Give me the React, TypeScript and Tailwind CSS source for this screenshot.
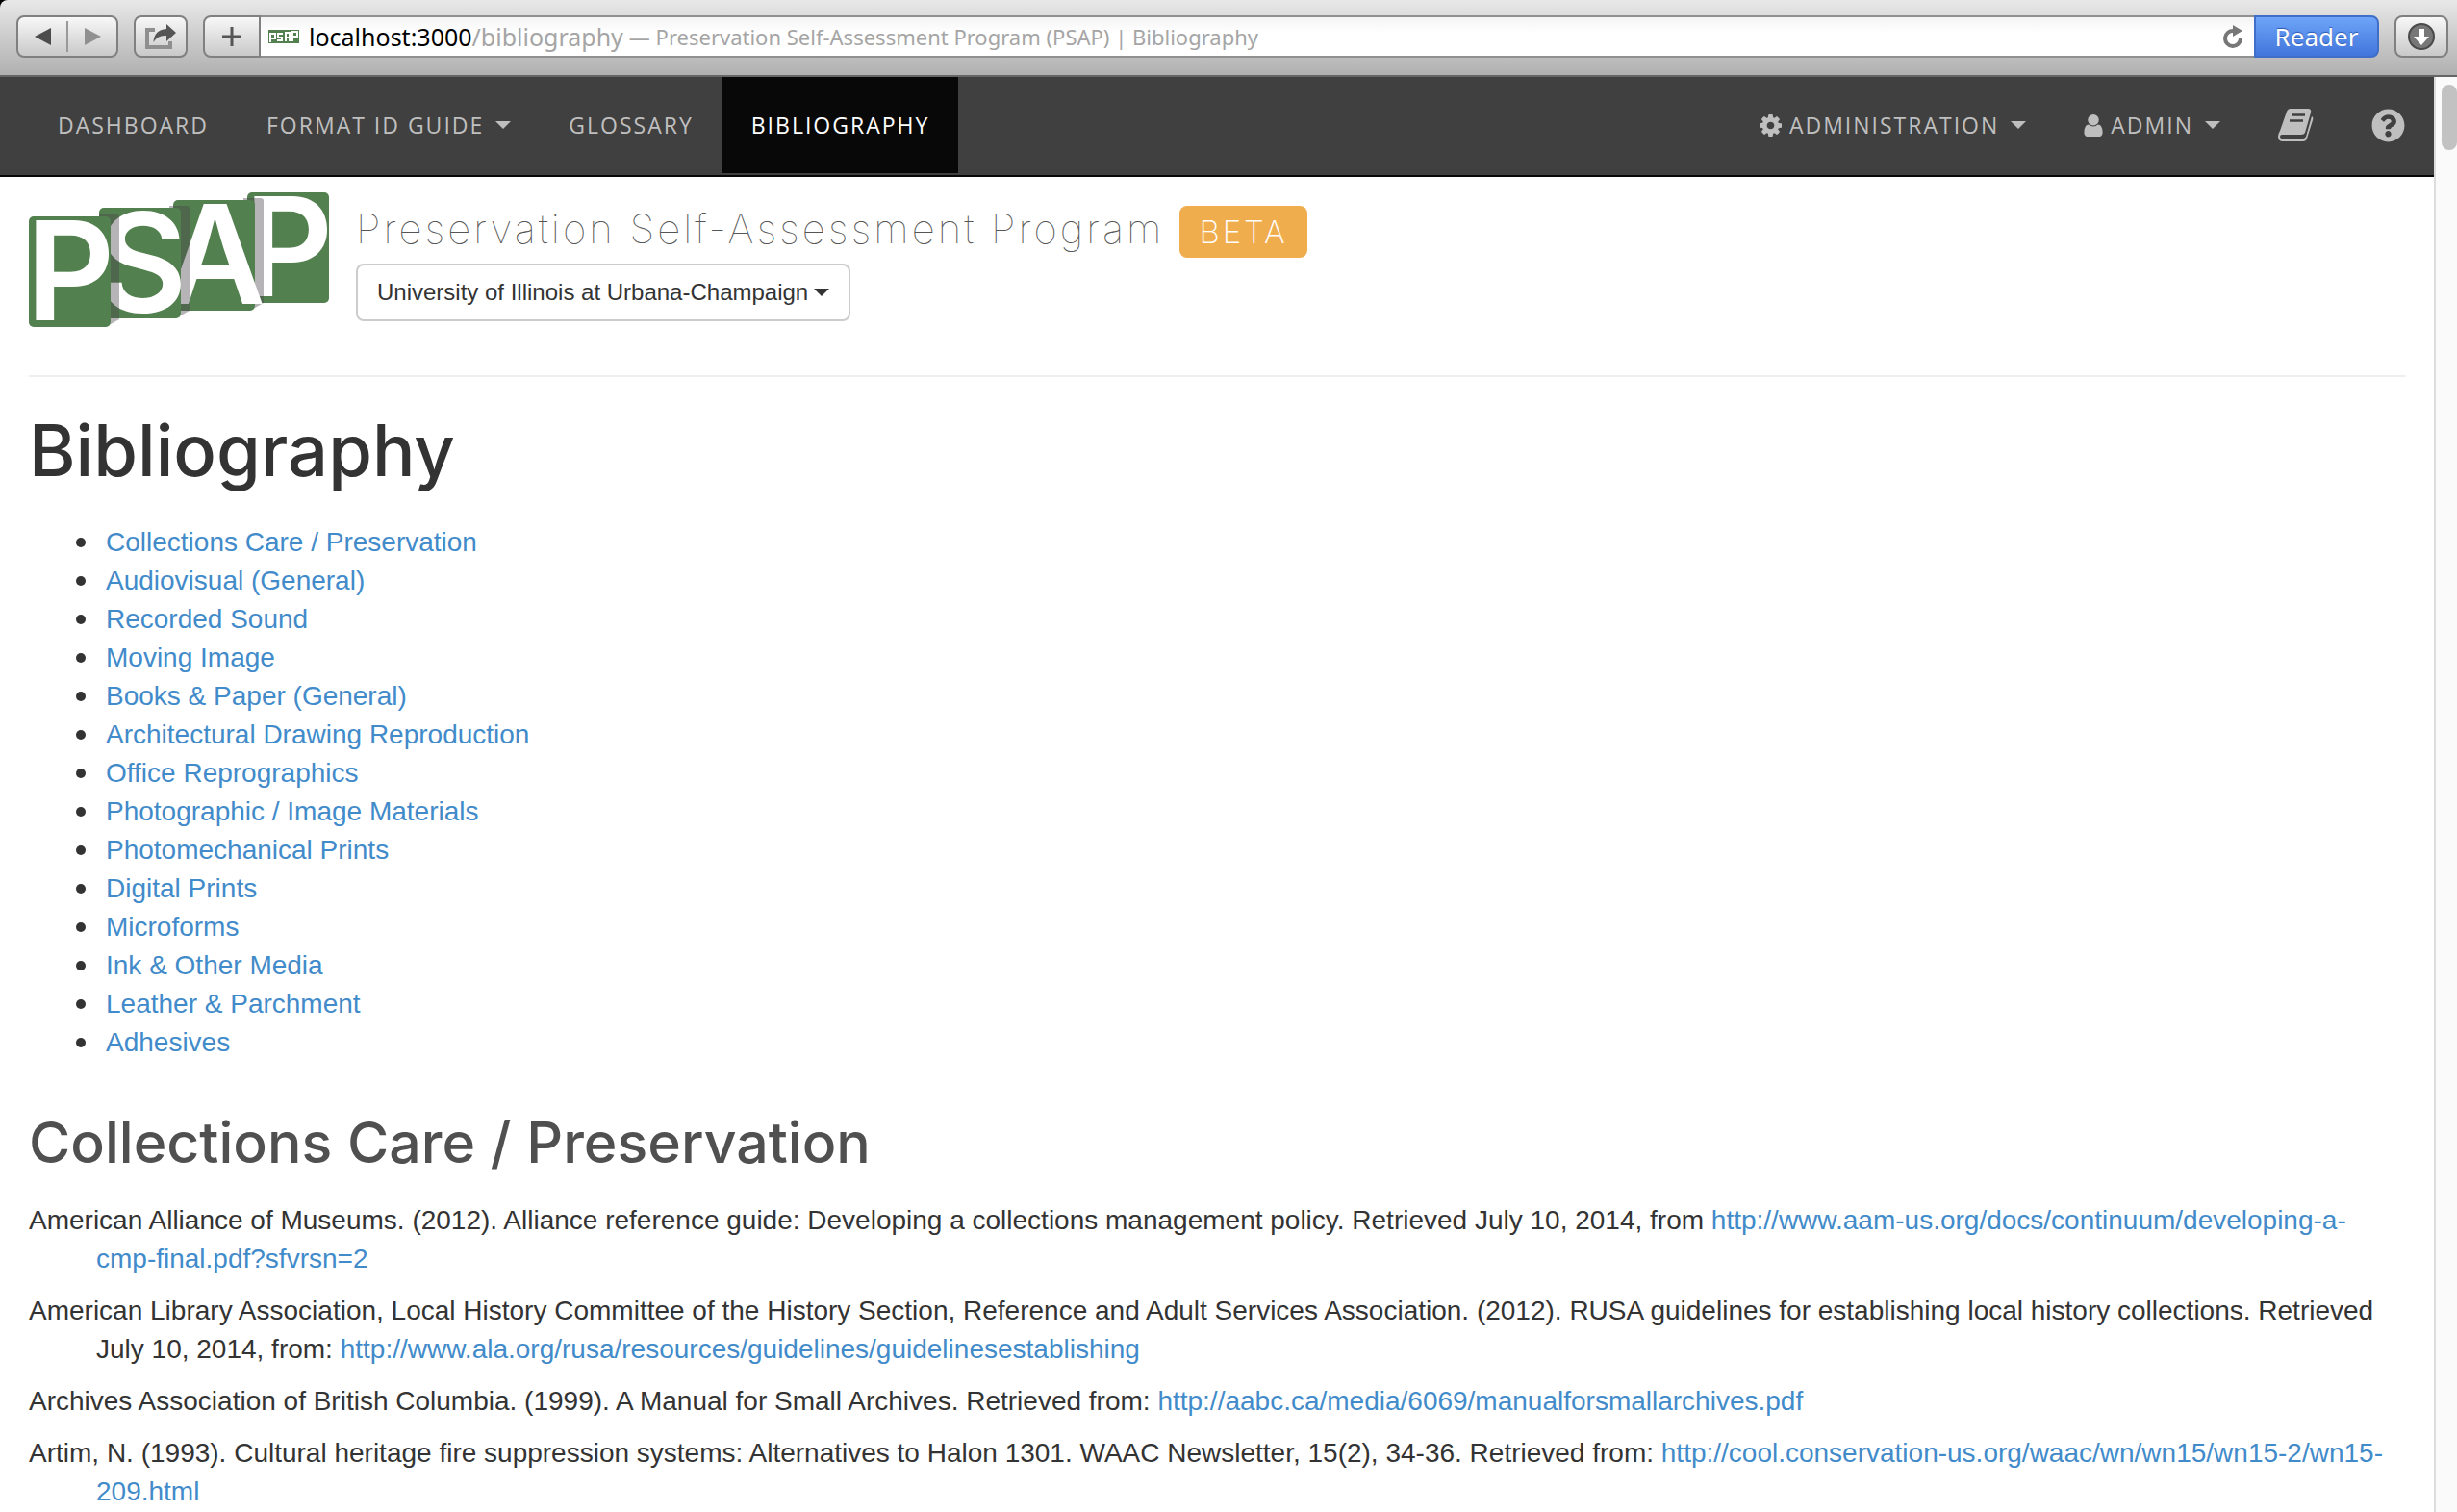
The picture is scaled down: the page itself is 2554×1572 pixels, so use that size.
import { FaQuestionCircle } from 'react-icons/fa';

const topics = [
  'Collections Care / Preservation', 'Audiovisual (General)', 'Recorded Sound', 'Moving Image',
  'Books & Paper (General)', 'Architectural Drawing Reproduction', 'Office Reprographics',
  'Photographic / Image Materials', 'Photomechanical Prints', 'Digital Prints', 'Microforms',
  'Ink & Other Media', 'Leather & Parchment', 'Adhesives',
];

const references = [
  { text: 'American Alliance of Museums. (2012). Alliance reference guide: Developing a collections management policy. Retrieved July 10, 2014, from ', url: 'http://www.aam-us.org/docs/continuum/developing-a-cmp-final.pdf?sfvrsn=2' },
  { text: 'American Library Association, Local History Committee of the History Section, Reference and Adult Services Association. (2012). RUSA guidelines for establishing local history collections. Retrieved July 10, 2014, from: ', url: 'http://www.ala.org/rusa/resources/guidelines/guidelinesestablishing' },
  { text: 'Archives Association of British Columbia. (1999). A Manual for Small Archives. Retrieved from: ', url: 'http://aabc.ca/media/6069/manualforsmallarchives.pdf' },
  { text: 'Artim, N. (1993). Cultural heritage fire suppression systems: Alternatives to Halon 1301. WAAC Newsletter, 15(2), 34-36. Retrieved from: ', url: 'http://cool.conservation-us.org/waac/wn/wn15/wn15-2/wn15-209.html' },
];

function Caret() {
  return <svg className="h-2 w-4 shrink-0" viewBox="0 0 16 8" fill="currentColor" aria-hidden="true"><path d="M0 0H16L8 8Z" /></svg>;
}

function CogIcon() {
  return (
    <svg className="size-[23px]" viewBox="128 128 1536 1536" fill="currentColor" aria-hidden="true">
      <path d="M1152 896q0-106-75-181t-181-75-181 75-75 181 75 181 181 75 181-75 75-181zm512-109v222q0 12-8 23t-20 13l-185 28q-19 54-39 91 35 50 107 138 10 12 10 25t-9 23q-27 37-99 108t-94 71q-12 0-26-9l-138-108q-44 23-91 38-16 136-29 186-7 28-36 28h-222q-14 0-24.5-8.5t-11.5-21.500l-28-184q-49-16-90-37l-141 107q-10 9-25 9-14 0-25-11-126-114-165-168-7-10-7-23 0-12 8-23 15-21 51-66.500t54-70.500q-27-50-41-99l-183-27q-13-2-21-12.500t-8-23.500v-222q0-12 8-23t19-13l186-28q14-46 39-92-40-57-107-138-10-12-10-24 0-10 9-23 26-36 98.500-107.500t94.500-71.500q13 0 26 10l138 107q44-23 91-38 16-136 29-186 7-28 36-28h222q14 0 24.500 8.500t11.500 21.500l28 184q49 16 90 37l142-107q9-9 24-9 13 0 25 10 129 119 165 170 7 8 7 22 0 12-8 23-15 21-51 66.500t-54 70.500q26 50 41 98l183 28q13 2 21 12.500t8 23.500z" />
    </svg>
  );
}

function UserIcon() {
  return (
    <svg className="h-[23px] w-5" viewBox="256 128 1280 1536" fill="currentColor" aria-hidden="true">
      <path d="M1536 1399q0 109-62.500 187t-150.500 78h-854q-88 0-150.500-78t-62.500-187q0-85 8.500-160.500t31.500-152 58.500-131 94-89 134.500-34.500q131 128 313 128t313-128q76 0 134.500 34.500t94 89 58.500 131 31.500 152 8.500 160.500zm-256-887q0 159-112.500 271.500t-271.500 112.500-271.500-112.500-112.500-271.500 112.500-271.500 271.500-112.500 271.500 112.500 112.500 271.500z" />
    </svg>
  );
}

function BookIcon() {
  return (
    <svg className="h-9 w-[37px]" viewBox="0 0 37 36" aria-hidden="true">
      <path d="M13 1H31Q35 1 34 5L28 26Q27 28 24 28H4Q2 28 2 30Q2 32 5 32H26Q28 32 29 30L35 9Q37 10 36 13L30 32Q29 35 26 35H5Q0 35 0 30Q0 27 2 24L9 4Q10 1 13 1Z" fill="currentColor" />
      <path d="M14 7.500H28M12 13.500H26" stroke="#404040" strokeWidth="2.500" />
    </svg>
  );
}

const logoTiles = [
  { x: 227, y: 0, cx: 270, letter: 'P' },
  { x: 150, y: 8, cx: 194, letter: 'A' },
  { x: 73, y: 16, cx: 118, letter: 'S' },
  { x: 0, y: 25, cx: 43, letter: 'P' },
];

function Logo() {
  return (
    <svg className="h-[140px] w-[312px] shrink-0 overflow-visible" viewBox="0 0 312 140" role="img" aria-label="PSAP">
      {logoTiles.map((t, i) => (
        <g key={t.x}>
          {i > 0 && <path d={`M${t.x + 73} ${t.y - 2}h18q3 0 3 3V${t.y + 107}L${t.x + 85} ${t.y + 112}h-10z`} fill="#4a434a" fillOpacity="0.4" />}
          <rect x={t.x} y={t.y} width="85" height="115" rx="5" fill="#52804f" />
          <text x={t.cx} y={t.y + 108} textAnchor="middle" className="font-['Inter'] text-[143px] font-semibold" fill="#fff">{t.letter}</text>
        </g>
      ))}
    </svg>
  );
}

const toolButton = 'flex h-11 items-center justify-center border-2 border-[#808080] bg-linear-to-b from-[#f8f8f8] to-[#c9c9c9]';

function BrowserBar() {
  return (
    <div className="bg-black">
      <header className="flex h-20 items-start rounded-tl-lg border-b-2 border-[#666] bg-linear-to-b from-[#e8e8e8] to-[#b0b0b0] px-[17px] pt-4 font-['Noto_Sans',sans-serif]">
        <div className={`${toolButton} mr-4 w-[106px] rounded-lg`}>
          <button aria-label="Back" className="flex flex-1 justify-center"><svg className="h-[18px] w-[17px]" viewBox="0 0 17 18"><path d="M17 0V18L0 9Z" fill="#4c4c4c" /></svg></button>
          <span className="h-8 w-0.5 bg-[#999]" />
          <button aria-label="Forward" className="flex flex-1 justify-center"><svg className="h-[18px] w-[17px]" viewBox="0 0 17 18"><path d="M0 0V18L17 9Z" fill="#909090" /></svg></button>
        </div>
        <button aria-label="Share" className={`${toolButton} mr-4 w-14 rounded-lg`}>
          <svg className="h-[27px] w-8" viewBox="0 0 32 27"><path d="M10 6H2V24H26V18" fill="none" stroke="#8f8f8f" strokeWidth="4" /><path d="M8.500 19Q9 6 22 5V0L32 9L22 18V12Q13 11 8.500 19Z" fill="#555" /></svg>
        </button>
        <button aria-label="Add bookmark" className={`${toolButton} w-[60px] rounded-l-lg`}>
          <svg className="h-5 w-5" viewBox="0 0 20 20"><path d="M10 0V20M0 10H20" stroke="#555" strokeWidth="3" /></svg>
        </button>
        <div className="flex h-11 min-w-0 flex-1 items-center border-y-2 border-[#909090] bg-linear-to-b from-[#f4f4f4] to-white to-40% pr-3 pl-2 text-[25px] whitespace-nowrap text-[#a5a5a5]">
          <svg className="mr-2.5 h-[14px] w-8" viewBox="0 0 32 14" aria-hidden="true"><rect width="32" height="14" fill="#52804f" /><path d="M2 13V4H7V9H2M15 4H10V8H14V11H9M18 12V3H22V12M18 8H22M25 12V2H30V7H25" fill="none" stroke="#fff" strokeWidth="2" /></svg>
          <span className="text-black">localhost:3000</span><span>/bibliography</span>
          <span className="ml-1.5 flex-1 truncate text-[22px]">— Preservation Self-Assessment Program (PSAP) | Bibliography</span>
          <button aria-label="Reload"><svg className="h-6 w-5" viewBox="0 0 20 24"><path d="M11 6A8 8 0 1 0 18 14" fill="none" stroke="#777" strokeWidth="4" /><path d="M10 0L20 6L10 12Z" fill="#777" /></svg></button>
        </div>
        <button className="mr-4 h-11 w-[130px] rounded-r-lg border-2 border-[#3f6fc9] bg-linear-to-b from-[#6ea5f8] to-[#4275dc] text-[26px] leading-8 text-white text-shadow-[0_-1px_1px_#2d59b0]">Reader</button>
        <button aria-label="Downloads" className={`${toolButton} -mr-2 w-14 rounded-lg`}>
          <svg className="h-7 w-7" viewBox="0 0 28 28"><circle cx="14" cy="14" r="13" fill="#777" stroke="#4a4a4a" strokeWidth="2" /><path d="M11 6H17V14H22L14 23L6 14H11Z" fill="#fff" /></svg>
        </button>
      </header>
    </div>
  );
}

const navLink = 'flex h-[100px] items-center px-[30px]';

function NavBar() {
  return (
    <nav className="flex h-[104px] items-start border-b-2 border-[#080808] bg-[#404040] pl-[30px] font-['Open_Sans',sans-serif] text-[23px] tracking-[2px] text-[#bfbfbf]">
      <a href="#dashboard" className={navLink}>DASHBOARD</a>
      <a href="#formats" className={`${navLink} gap-3`}>FORMAT ID GUIDE <Caret /></a>
      <a href="#glossary" className={navLink}>GLOSSARY</a>
      <a href="#bibliography" className={`${navLink} bg-[#080808] text-white`}>BIBLIOGRAPHY</a>
      <div className="flex-1" />
      <a href="#administration" className={`${navLink} gap-3`}><span className="flex items-center gap-2"><CogIcon />ADMINISTRATION</span><Caret /></a>
      <a href="#admin" className={`${navLink} gap-3`}><span className="flex items-center gap-2"><UserIcon />ADMIN</span><Caret /></a>
      <a href="#manual" aria-label="Manual" className={navLink}><BookIcon /></a>
      <a href="#help" aria-label="Help" className={navLink}><FaQuestionCircle className="size-[35px]" /></a>
    </nav>
  );
}

export default function App() {
  return (
    <div className="flex h-screen flex-col overflow-hidden bg-white font-['Liberation_Sans',sans-serif] text-[28px] leading-10 text-[#333]">
      <BrowserBar />
      <div className="flex min-h-0 flex-1">
        <div className="min-w-0 flex-1">
          <NavBar />
          <main className="px-[30px] pt-4">
            <div className="flex border-b-2 border-[#eee] pb-[50px]">
              <Logo />
              <div className="ml-7">
                <div className="mt-[14px] flex items-baseline gap-4 font-['Inter',sans-serif] font-thin tracking-[3px]">
                  <p className="text-[42px] leading-[48px] text-[#555]">Preservation Self-Assessment Program</p>
                  <span className="rounded-lg bg-[#f0ad4e] px-5 text-[33px] leading-[54px] font-extralight text-white">BETA</span>
                </div>
                <button className="mt-1.5 flex h-[60px] items-center gap-1.5 rounded-lg border-2 border-[#ccc] px-5 text-[24px] text-[#333]">University of Illinois at Urbana-Champaign <Caret /></button>
              </div>
            </div>
            <h1 className="mt-9 font-['Inter',sans-serif] text-[74px] leading-20 font-medium">Bibliography</h1>
            <ul className="mt-9 pl-[49px]">
              {topics.map((t) => (
                <li key={t} className="flex items-center before:mr-[21px] before:size-2.5 before:rounded-full before:bg-[#333]">
                  <a href={`#${encodeURIComponent(t)}`} className="text-[#428bca]">{t}</a>
                </li>
              ))}
            </ul>
            <h2 className="mt-[51px] mb-7 font-['Inter',sans-serif] text-[59px] leading-[66px] font-medium text-[#505050]">Collections Care / Preservation</h2>
            {references.map((r) => (
              <p key={r.url} className="mb-[14px] pl-[70px] -indent-[70px]">{r.text}<a href={r.url} className="text-[#428bca]">{r.url}</a></p>
            ))}
          </main>
        </div>
        <div className="flex w-6 shrink-0 justify-end border-l-2 border-[#ddd] bg-[#fafafa] pt-2" aria-hidden="true">
          <div className="h-[68px] w-4 rounded-full bg-[#c2c2c2]" />
        </div>
      </div>
    </div>
  );
}
